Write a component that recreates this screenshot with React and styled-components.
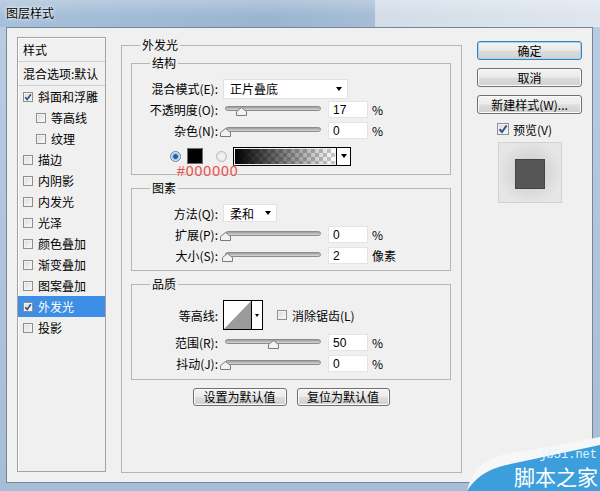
import React from 'react';
import styled, { createGlobalStyle } from 'styled-components';

const GlobalStyle = createGlobalStyle`
  html, body { margin: 0; padding: 0; background: #fff; }
  body {
    font-family: "Noto Sans CJK SC", "Liberation Sans", sans-serif;
    font-size: 12px;
    color: #000;
  }
  * { box-sizing: border-box; }
`;

const Window = styled.div`
  position: relative;
  width: 600px;
  height: 491px;
  overflow: hidden;
  display: flex;
  flex-direction: column;
  background: linear-gradient(to bottom, #b9cde2, #a6bdd6);
`;

const TitleBar = styled.div`
  height: 27px;
  flex: none;
  display: flex;
  align-items: center;
  padding: 0 0 1px 6px;
  font-size: 12px;
  line-height: 14px;
  text-shadow: 0 0 5px #fff, 0 0 2px #fff;
  background:
    linear-gradient(to bottom, rgba(255,255,255,0.25), rgba(255,255,255,0) 60%),
    linear-gradient(to right, #a7c0da 0%, #9bb5d1 45%, #a6bdd5 62.4%, #d3dce7 62.6%, #dfe6ee 100%);
`;

const Frame = styled.div`
  flex: 1;
  margin: 0 7px 8px 6px;
  border: 1px solid #72869c;
  background: #f0f0f0;
  display: flex;
  align-items: flex-start;
  padding: 9px 0 0 10px;
`;

/* ---------- left style list ---------- */
const StyleList = styled.div`
  width: 89px;
  height: 435px;
  flex: none;
  border: 1px solid #a3a3a3;
  box-shadow: inset 1px 1px 0 #fff;
  background: #f0f0f0;
  overflow: hidden;
`;

const ListHeader = styled.div`
  height: 24px;
  padding-left: 5px;
  display: flex;
  align-items: center;
  white-space: nowrap;
  border-bottom: 1px solid #cfcfcf;
`;

const ListItem = styled.div`
  height: 21px;
  display: flex;
  align-items: center;
  gap: 5px;
  white-space: nowrap;
  padding-left: ${p => (p.$indent ? 18 : 5)}px;
  background: ${p => (p.$active ? '#3d8ee4' : 'transparent')};
  color: ${p => (p.$active ? '#fff' : '#000')};
`;

const Box = styled.span`
  flex: none;
  width: ${p => p.$size || 10}px;
  height: ${p => p.$size || 10}px;
  border: 1px solid #8e8f8f;
  background: linear-gradient(135deg, #d9d9d9, #fbfbfb);
  box-shadow: inset 0 0 0 1px #f2f2f2;
  display: inline-flex;
  align-items: center;
  justify-content: center;
`;

const Check = ({ checked, size }) => (
  <Box $size={size}>
    {checked && (
      <svg width={(size || 10) - 2} height={(size || 10) - 2} viewBox="0 0 8 8">
        <path d="M1.2 4.2 L3.2 6.4 L6.9 1.2" fill="none" stroke="#2c4f8c" strokeWidth="1.6" />
      </svg>
    )}
  </Box>
);

/* ---------- center groups ---------- */
const Center = styled.div`
  margin: 1px 0 0 15px;
  width: 341px;
  flex: none;
`;

const Group = styled.fieldset`
  margin: ${p => p.$top || 0}px 0 0 0;
  min-width: 0;
  border: 1px solid #b5b5b5;
  padding: ${p => p.$pad};
  height: ${p => (p.$h ? `${p.$h}px` : 'auto')};
`;

const Legend = styled.legend`
  padding: 0 2px;
  margin-left: ${p => p.$ml}px;
  font-size: 12px;
  line-height: 14px;
`;

const Row = styled.div`
  position: relative;
  height: ${p => p.$h || 21}px;
  margin-top: ${p => p.$mt || 0}px;
  display: flex;
  align-items: center;
`;

const Label = styled.span`
  width: 86px;
  flex: none;
  text-align: right;
  margin-right: 5px;
  white-space: nowrap;
`;

const Select = styled.div`
  width: ${p => p.$w}px;
  height: ${p => p.$h}px;
  background: #fff;
  border: 1px solid #e2e2e2;
  display: flex;
  align-items: center;
  justify-content: space-between;
  padding: 0 5px 0 6px;
`;

const Arrow = styled.span`
  width: 0;
  height: 0;
  border-left: 3.5px solid transparent;
  border-right: 3.5px solid transparent;
  border-top: 4px solid #000;
`;

const SliderWrap = styled.div`
  position: relative;
  width: 100px;
  height: 21px;
  flex: none;
`;

const Track = styled.div`
  position: absolute;
  left: 2px;
  right: 2px;
  top: 7px;
  height: 5px;
  border: 1px solid #8c8c8c;
  border-radius: 3px;
  background: linear-gradient(to bottom, #9c9c9c, #d8d8d8);
`;

const Thumb = styled.svg`
  position: absolute;
  top: 8px;
`;

const Slider = ({ value }) => (
  <SliderWrap>
    <Track />
    <Thumb width="11" height="9" viewBox="0 0 11 9" style={{ left: 2 + (value / 100) * 96 - 5 }}>
      <path d="M5.5 0.5 L10.5 4.5 L10.5 8.5 L0.5 8.5 L0.5 4.5 Z" fill="#f2f2f2" stroke="#7a7a7a" />
    </Thumb>
  </SliderWrap>
);

const NumBox = styled.div`
  width: 40px;
  height: 17px;
  margin-left: 5px;
  background: #fff;
  border: 1px solid #e4e4e4;
  padding-left: 4px;
  display: flex;
  align-items: center;
  font-family: "Liberation Sans", sans-serif;
`;

const Unit = styled.span`
  margin-left: 4px;
  white-space: nowrap;
`;

const SliderRow = ({ label, value, unit = '%', mt }) => (
  <Row $mt={mt}>
    <Label>{label}</Label>
    <Slider value={value} />
    <NumBox>{value}</NumBox>
    <Unit>{unit}</Unit>
  </Row>
);

const ColorRow = styled(Row)`
  padding-left: 38px;
`;

const Radio = styled.span`
  width: 11px;
  height: 11px;
  flex: none;
  border-radius: 50%;
  border: 1px solid ${p => (p.$on ? '#5d7fa6' : '#b9b9b9')};
  background: ${p => (p.$on
    ? 'radial-gradient(circle, #1d5fa8 0 2px, #7fa9d6 2.5px, #dfe9f4 4px)'
    : 'radial-gradient(circle, #f6f6f6, #e1e1e1)')};
  margin-right: ${p => p.$mr}px;
`;

const Swatch = styled.span`
  width: 16px;
  height: 16px;
  flex: none;
  background: #000;
  border: 1px solid #6b6b6b;
  margin-right: 13px;
`;

const GradientPick = styled.div`
  width: 118px;
  height: 19px;
  border: 1px solid #000;
  display: flex;
`;

const GradientFill = styled.div`
  flex: 1;
  margin: 1px;
  background:
    linear-gradient(to right, #000, rgba(0, 0, 0, 0)),
    repeating-conic-gradient(#c9c9c9 0 25%, #fff 0 50%) 0 0 / 8px 8px;
`;

const GradientArrow = styled.div`
  width: 14px;
  border-left: 1px solid #000;
  background: #fff;
  display: flex;
  align-items: center;
  justify-content: center;
`;

const HexNote = styled.span`
  position: absolute;
  left: 45px;
  top: 18px;
  font-family: "Liberation Sans", sans-serif;
  font-size: 14px;
  line-height: 14px;
  letter-spacing: 1px;
  color: #d9534f;
  text-shadow: 0 0 2px #ffe3e3, 0 0 3px #ffe3e3;
`;

const Contour = styled.div`
  width: 40px;
  height: 30px;
  flex: none;
  border: 1px solid #000;
  background: #fff;
  display: flex;
  margin-right: 14px;
`;

const ContourArrow = styled.div`
  width: 11px;
  border-left: 1px solid #000;
  display: flex;
  align-items: center;
  justify-content: center;
`;

const SmallArrow = styled(Arrow)`
  border-left-width: 2.5px;
  border-right-width: 2.5px;
  border-top-width: 3px;
`;

const CheckLabel = styled.span`
  display: flex;
  align-items: center;
  gap: ${p => p.$gap || 5}px;
  white-space: nowrap;
`;

const ButtonRow = styled.div`
  display: flex;
  justify-content: center;
  gap: 10px;
  margin-top: 8px;
`;

const Button = styled.div`
  width: ${p => p.$w}px;
  height: ${p => p.$h || 18}px;
  display: flex;
  align-items: center;
  justify-content: center;
  border: 1px solid ${p => (p.$primary ? '#3c7fb1' : '#707070')};
  border-radius: 3px;
  background: linear-gradient(to bottom, #f3f3f3 0%, #ebebeb 48%, #dddddd 52%, #d0d0d0 100%);
  box-shadow: inset 0 0 0 1px ${p => (p.$primary ? '#9fd8f2' : '#fbfbfb')};
  white-space: nowrap;
  line-height: 14px;
`;

/* ---------- right column ---------- */
const Side = styled.div`
  margin: 4px 0 0 15px;
  width: 105px;
  flex: none;
  display: flex;
  flex-direction: column;
  gap: 8px;
`;

const PreviewToggle = styled.div`
  height: 16px;
  margin-top: -1px;
  padding-left: 20px;
  display: flex;
  align-items: center;
`;

const PreviewBox = styled.div`
  margin: -3px 0 0 21px;
  width: 64px;
  height: 61px;
  border: 1px solid #d2d2d2;
  background: radial-gradient(circle, #c9c9c9 0%, #dadada 45%, #e6e6e6 75%);
  display: flex;
  align-items: center;
  justify-content: center;
`;

const PreviewSquare = styled.div`
  width: 30px;
  height: 30px;
  background: #565656;
  border: 1px solid #444;
  margin-top: 2px;
`;

/* ---------- watermark ---------- */
const Watermark = styled.div`
  position: absolute;
  right: 0;
  bottom: 0;
  width: 136px;
  height: 54px;
`;

const WmSite = styled.span`
  position: absolute;
  right: 3px;
  top: 12px;
  font-family: "Liberation Mono", monospace;
  font-size: 12px;
  line-height: 12px;
  color: #e6f4ff;
`;

const WmName = styled.span`
  position: absolute;
  right: 2px;
  top: 28px;
  font-size: 21px;
  line-height: 23px;
  color: #fff;
  white-space: nowrap;
`;

const listItems = [
  { name: '斜面和浮雕', checked: true },
  { name: '等高线', indent: true },
  { name: '纹理', indent: true },
  { name: '描边' },
  { name: '内阴影' },
  { name: '内发光' },
  { name: '光泽' },
  { name: '颜色叠加' },
  { name: '渐变叠加' },
  { name: '图案叠加' },
  { name: '外发光', checked: true, active: true },
  { name: '投影' },
];

const App = () => {
  return (
    <Window>
      <GlobalStyle />
      <TitleBar>图层样式</TitleBar>
      <Frame>
        <StyleList>
          <ListHeader>样式</ListHeader>
          <ListHeader>混合选项:默认</ListHeader>
          {listItems.map(item => (
            <ListItem key={item.name} $indent={item.indent} $active={item.active}>
              <Check checked={item.checked} />
              {item.name}
            </ListItem>
          ))}
        </StyleList>

        <Center>
          <Group $h={435} $pad="4px 10px 0 9px">
            <Legend $ml={9}>外发光</Legend>

            <Group $pad="8px 0 8px 0">
              <Legend $ml={18}>结构</Legend>
              <Row>
                <Label>混合模式(E):</Label>
                <Select $w={125} $h={20}>
                  正片叠底
                  <Arrow />
                </Select>
              </Row>
              <SliderRow label="不透明度(O):" value={17} />
              <SliderRow label="杂色(N):" value={0} />
              <ColorRow $h={20} $mt={5}>
                <Radio $on $mr={6} />
                <Swatch />
                <Radio $mr={6} />
                <GradientPick>
                  <GradientFill />
                  <GradientArrow>
                    <Arrow />
                  </GradientArrow>
                </GradientPick>
                <HexNote>#000000</HexNote>
              </ColorRow>
            </Group>

            <Group $top={6} $pad="7px 0 4px 0">
              <Legend $ml={18}>图素</Legend>
              <Row $h={22}>
                <Label>方法(Q):</Label>
                <Select $w={54} $h={18}>
                  柔和
                  <Arrow />
                </Select>
              </Row>
              <SliderRow label="扩展(P):" value={0} />
              <SliderRow label="大小(S):" value={2} unit="像素" />
            </Group>

            <Group $top={6} $pad="9px 0 5px 0">
              <Legend $ml={18}>品质</Legend>
              <Row $h={30}>
                <Label>等高线:</Label>
                <Contour>
                  <svg width="27" height="28" viewBox="0 0 27 28">
                    <path d="M0 28 L27 0 L27 28 Z" fill="#9b9b9b" />
                  </svg>
                  <ContourArrow>
                    <SmallArrow />
                  </ContourArrow>
                </Contour>
                <CheckLabel>
                  <Check />
                  消除锯齿(L)
                </CheckLabel>
              </Row>
              <SliderRow label="范围(R):" value={50} mt={2} />
              <SliderRow label="抖动(J):" value={0} />
            </Group>

            <ButtonRow>
              <Button $w={94}>设置为默认值</Button>
              <Button $w={93}>复位为默认值</Button>
            </ButtonRow>
          </Group>
        </Center>

        <Side>
          <Button $w={105} $h={19} $primary>确定</Button>
          <Button $w={105} $h={19}>取消</Button>
          <Button $w={105} $h={19}>新建样式(W)...</Button>
          <PreviewToggle>
            <CheckLabel $gap={4}>
              <Check checked size={12} />
              预览(V)
            </CheckLabel>
          </PreviewToggle>
          <PreviewBox>
            <PreviewSquare />
          </PreviewBox>
        </Side>
      </Frame>

      <Watermark>
        <svg width="136" height="54" viewBox="0 0 136 54">
          <path d="M3 54 C7 36 17 24 38 18 L136 0 L136 8 Z" fill="#f7f7f7" />
          <path d="M3 54 C11 41 22 33 42 28 L136 8 L136 54 Z" fill="#3c9fdc" />
        </svg>
        <WmSite>jb51.net</WmSite>
        <WmName>脚本之家</WmName>
      </Watermark>
    </Window>
  );
};

export default App;
